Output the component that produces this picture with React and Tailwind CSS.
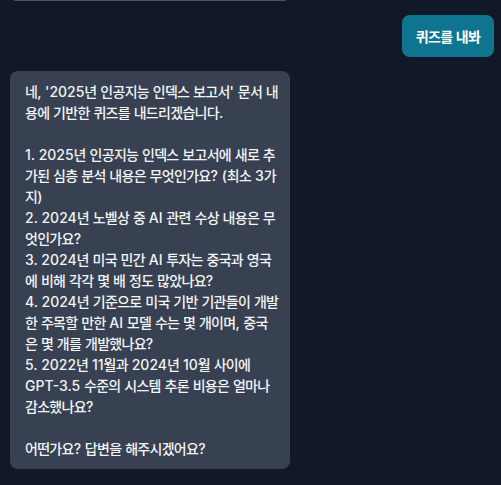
import React from "react";

const lines = [
  "네, '2025년 인공지능 인덱스 보고서' 문서 내",
  "용에 기반한 퀴즈를 내드리겠습니다.",
  "",
  "1. 2025년 인공지능 인덱스 보고서에 새로 추",
  "가된 심층 분석 내용은 무엇인가요? (최소 3가",
  "지)",
  "2. 2024년 노벨상 중 AI 관련 수상 내용은 무",
  "엇인가요?",
  "3. 2024년 미국 민간 AI 투자는 중국과 영국",
  "에 비해 각각 몇 배 정도 많았나요?",
  "4. 2024년 기준으로 미국 기반 기관들이 개발",
  "한 주목할 만한 AI 모델 수는 몇 개이며, 중국",
  "은 몇 개를 개발했나요?",
  "5. 2022년 11월과 2024년 10월 사이에",
  "GPT-3.5 수준의 시스템 추론 비용은 얼마나",
  "감소했나요?",
  "",
  "어떤가요? 답변을 해주시겠어요?",
];

function Ko({ children }) {
  const parts = children.split(/([\uAC00-\uD7A3]+)/);
  return parts.map((p, i) =>
    /[\uAC00-\uD7A3]/.test(p) ? (
      <span key={i} className="tracking-[-0.7px]">
        {p}
      </span>
    ) : (
      <span key={i}>{p}</span>
    )
  );
}

export default function App() {
  return (
    <div
      className="min-h-screen w-full bg-[#111827] flex flex-col"
      style={{ fontFamily: '"Inter", "Noto Sans CJK KR", sans-serif' }}
    >
      <div className="ml-[14px] w-[272px] h-px bg-[#4b5563] rounded-b" />
      <div className="flex justify-end pr-[7px] mt-[14px]">
        <div className="h-[42px] w-[92px] justify-center flex items-center rounded-lg bg-[#0e7490] text-white text-[14px] font-semibold">
          <span className="whitespace-pre">
            <Ko>퀴즈를 내봐</Ko>
          </span>
        </div>
      </div>
      <div className="mt-[14px] ml-[10px] w-[280px] rounded-lg bg-[#374151] px-[15px] py-[10px] text-[14px] leading-[21px] text-gray-100 font-medium">
        {lines.map((l, i) =>
          l === "" ? (
            <div key={i} className="h-[21px]" />
          ) : (
            <div key={i} className="whitespace-pre">
              <Ko>{l}</Ko>
            </div>
          )
        )}
      </div>
    </div>
  );
}
